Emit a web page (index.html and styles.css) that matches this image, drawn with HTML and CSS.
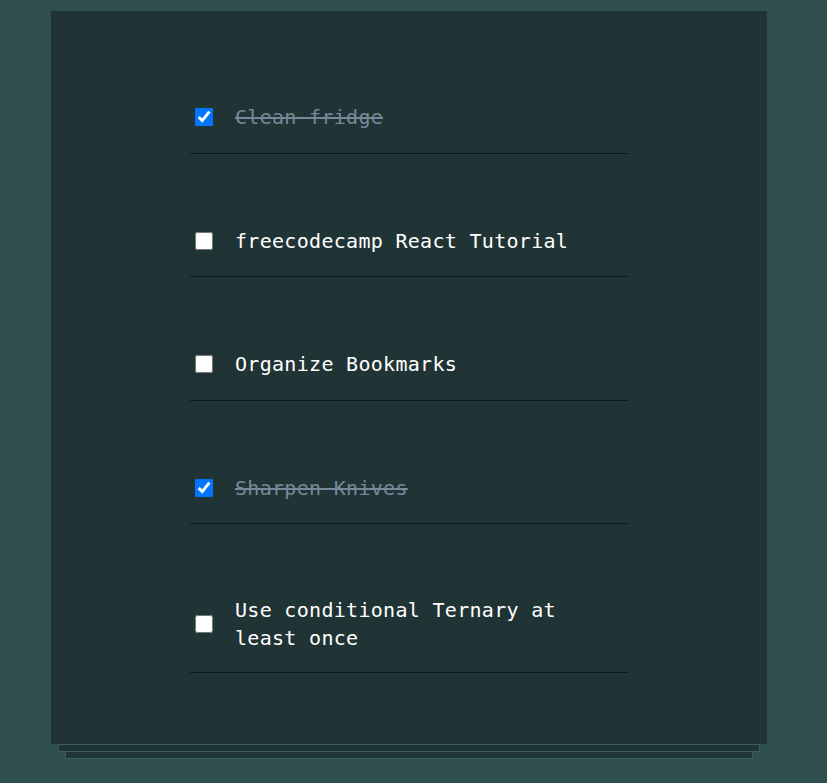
FILE: index.html
```html
<!DOCTYPE html>
<html>
<head>
<meta charset="utf-8">
<link rel="stylesheet" href="styles.css">
</head>
<body>
<div class="card">
  <ul class="todo-list">
    <li class="todo-item done"><input type="checkbox" checked><span class="label">Clean fridge</span></li>
    <li class="todo-item"><input type="checkbox"><span class="label">freecodecamp React Tutorial</span></li>
    <li class="todo-item"><input type="checkbox"><span class="label">Organize Bookmarks</span></li>
    <li class="todo-item done"><input type="checkbox" checked><span class="label">Sharpen Knives</span></li>
    <li class="todo-item"><input type="checkbox"><span class="label">Use conditional Ternary at least once</span></li>
  </ul>
</div>
</body>
</html>
```
FILE: styles.css
```css
html, body {
  margin: 0;
  padding: 0;
  background: #2f4f4f;
  height: 100%;
}
body {
  padding: 11px 0 0 51px;
  box-sizing: border-box;
}
.card {
  position: relative;
  width: 716px;
  background: #213435;
  padding: 71px 0 71px;
  box-sizing: border-box;
}
.card::before,
.card::after {
  content: "";
  position: absolute;
  height: 6px;
  background: #213435;
  border: 1px solid #3f5c5c;
}
.card::before {
  top: 100%;
  left: 7px;
  right: 7px;
}
.card::after {
  top: calc(100% + 7px);
  left: 14px;
  right: 14px;
}
.todo-list {
  list-style: none;
  margin: 0 auto;
  padding: 0;
  width: 438px;
}
.todo-item {
  display: flex;
  align-items: center;
  padding: 21.25px 40px 21.25px 5px;
  border-bottom: 1px solid #111a1a;
  margin-top: 52px;
}
.todo-item:first-child {
  margin-top: 0;
}
.todo-item:last-child {
  padding-top: 20px;
  padding-bottom: 20px;
}
.todo-item input {
  width: 18px;
  height: 18px;
  margin: 0 22px 0 0;
  flex: none;
}
.label {
  font-family: "DejaVu Sans Mono", "Liberation Mono", monospace;
  font-size: 20px;
  letter-spacing: 0.3px;
  line-height: 28px;
  color: #ffffff;
}
.done .label {
  color: #778899;
  text-decoration: line-through;
}
```
